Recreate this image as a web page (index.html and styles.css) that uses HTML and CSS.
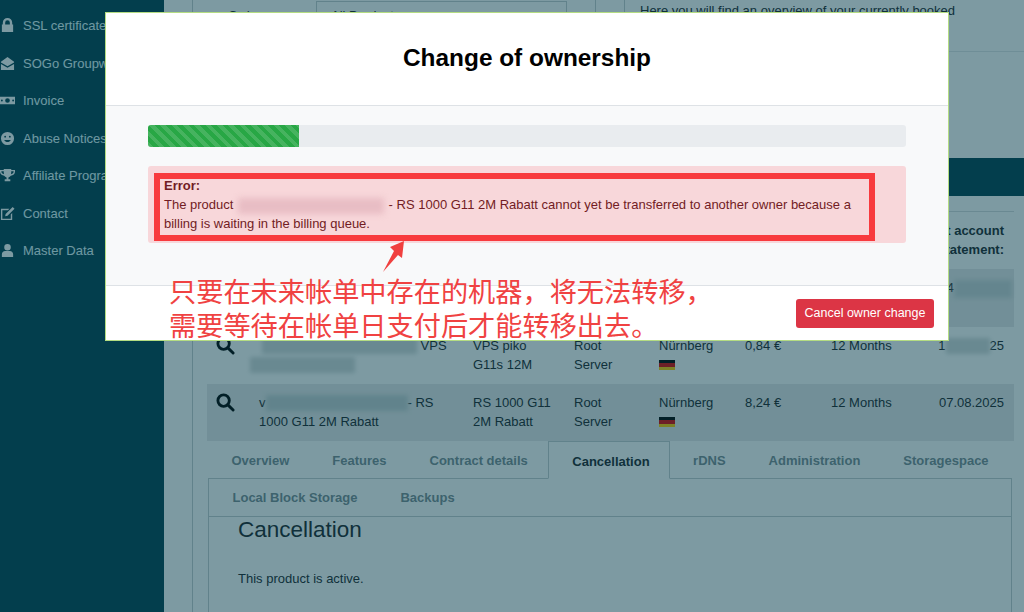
FILE: index.html
```html
<!doctype html>
<html lang="en">
<head>
  <meta charset="UTF-8">
  <meta name="viewport" content="width=device-width, initial-scale=1.0">
  <title>Change of ownership</title>
  <link rel="stylesheet" href="styles.css">
</head>
<body>
  <div class="page">
    <nav class="sidebar">
      <a class="side-item">
        <svg class="side-icon" viewBox="0 0 16 16"><path d="M3 7V5a5 5 0 0 1 10 0v2h1v8H2V7zm2.500 0h5V5a2.500 2.500 0 0 0-5 0z"/></svg>
        SSL certificates
      </a>
      <a class="side-item">
        <svg class="side-icon" viewBox="0 0 16 16"><path d="M8 1l7 5v1L8 11 1 7V6zM1 8.500l7 4 7-4V15H1z"/></svg>
        SOGo Groupware
      </a>
      <a class="side-item">
        <svg class="side-icon" viewBox="0 0 16 16"><path fill-rule="evenodd" d="M0 4h16v8H0zm8 1.500a2.500 2.500 0 1 0 0 5 2.500 2.500 0 0 0 0-5zM2 7a1 1 0 1 0 0 2 1 1 0 0 0 0-2zm12 0a1 1 0 1 0 0 2 1 1 0 0 0 0-2z"/></svg>
        Invoice
      </a>
      <a class="side-item">
        <svg class="side-icon" viewBox="0 0 16 16"><path fill-rule="evenodd" d="M8 1a7 7 0 1 1 0 14A7 7 0 0 1 8 1zM5.500 5a1 1 0 1 0 0 2 1 1 0 0 0 0-2zm5 0a1 1 0 1 0 0 2 1 1 0 0 0 0-2zM4.500 9.500c.8 1.500 2 2.200 3.500 2.200s2.700-.7 3.500-2.200z"/></svg>
        Abuse Notices
      </a>
      <a class="side-item">
        <svg class="side-icon" viewBox="0 0 16 16"><path fill-rule="evenodd" d="M4 1h8v1h4v2c0 2.500-2 4-4.500 4.300A4 4 0 0 1 9 10v2h2v2H5v-2h2v-2a4 4 0 0 1-2.500-1.700C2 8 0 6.500 0 4V2h4zM1.500 3.500V4c0 1.200.9 2.200 2.800 2.700A12 12 0 0 1 4 3.500zm13 0H12a12 12 0 0 1-.3 3.200c1.900-.5 2.800-1.500 2.800-2.700z"/></svg>
        Affiliate Program
      </a>
      <a class="side-item">
        <svg class="side-icon" viewBox="0 0 16 16"><path d="M2 3h8L8.500 4.500H2.500v9h9V9L13 7.500V15H1V3zM13.500 1L15.500 3 8 10.500 5.500 11 6 8.500z"/></svg>
        Contact
      </a>
      <a class="side-item">
        <svg class="side-icon" viewBox="0 0 16 16"><path d="M8 1a3.500 3.500 0 1 1 0 7 3.500 3.500 0 0 1 0-7zM2 15v-3c0-2 1.500-3.500 3.500-3.500h5C12.500 8.500 14 10 14 12v3z"/></svg>
        Master Data
      </a>
    </nav>

    <main class="main">
      <div class="intro">
        <div class="intro-form">
          <span class="intro-label">Order</span>
          <div class="intro-input">All Products</div>
        </div>
        <div class="intro-side"></div>
        <p class="intro-text">Here you will find an overview of your currently booked</p>
      </div>

      <div class="band"></div>

      <section class="products">
        <div class="row row-head">
          <div class="col-date">Next account statement:</div>
        </div>
        <div class="row row-shade">
          <div class="col-date">4<span class="redact redact-date-long"></span></div>
        </div>
        <div class="row">
          <svg class="search-icon" viewBox="0 0 20 20"><circle cx="8" cy="8" r="6"/><path d="M12.500 12.500L18 18"/></svg>
          <div><span class="redact redact-name"></span> VPS<br><span class="redact redact-name-2"></span></div>
          <div>VPS piko<br>G11s 12M</div>
          <div>Root<br>Server</div>
          <div>Nürnberg<span class="flag"></span></div>
          <div>0,84 €</div>
          <div>12 Months</div>
          <div class="col-date">1<span class="redact redact-date"></span>25</div>
        </div>
        <div class="row row-shade">
          <svg class="search-icon" viewBox="0 0 20 20"><circle cx="8" cy="8" r="6"/><path d="M12.500 12.500L18 18"/></svg>
          <div>v<span class="redact redact-name-3"></span>- RS<br>1000 G11 2M Rabatt</div>
          <div>RS 1000 G11<br>2M Rabatt</div>
          <div>Root<br>Server</div>
          <div>Nürnberg<span class="flag"></span></div>
          <div>8,24 €</div>
          <div>12 Months</div>
          <div class="col-date">07.08.2025</div>
        </div>
      </section>

      <div class="tabs">
        <div class="tab-row tab-row-first">
          <a class="tab">Overview</a>
          <a class="tab">Features</a>
          <a class="tab">Contract details</a>
          <a class="tab tab-active">Cancellation</a>
          <a class="tab">rDNS</a>
          <a class="tab">Administration</a>
          <a class="tab">Storagespace</a>
        </div>
        <div class="tab-box">
          <div class="tab-row">
            <a class="tab">Local Block Storage</a>
            <a class="tab">Backups</a>
          </div>
          <div class="tab-content">
            <h2>Cancellation</h2>
            <p>This product is active.</p>
          </div>
        </div>
      </div>
    </main>
  </div>

  <div class="backdrop"></div>

  <div class="modal">
    <header class="modal-head">
      <h1>Change of ownership</h1>
    </header>
    <div class="modal-body">
      <div class="progress"><div class="progress-bar"></div></div>
      <div class="alert">
        <strong>Error:</strong><br>
        The product <span class="redact redact-alert"></span> - RS 1000 G11 2M Rabatt cannot yet be transferred to another owner because a billing is waiting in the billing queue.
      </div>
    </div>
    <footer class="modal-foot">
      <button class="btn-cancel">Cancel owner change</button>
    </footer>
  </div>

  <!-- red markup drawn on top of the screenshot -->
  <div class="note-box"></div>
  <svg class="note-arrow" viewBox="0 0 24 34"><polygon points="22,1 8,7 12,11 1,32 16,15 20,18"/></svg>
  <p class="note-text">只要在未来帐单中存在的机器，将无法转移，<br>需要等待在帐单日支付后才能转移出去。</p>
</body>
</html>
```

FILE: styles.css
```css
html, body {
  margin: 0;
  height: 100%;
  overflow: hidden;
}
body {
  position: relative;
  font-family: "Liberation Sans", Arial, sans-serif;
  font-size: 13px;
  line-height: 19px;
  color: #212529;
  background: #fff;
}
.page {
  display: flex;
  height: 612px;
  overflow: hidden;
}

/* sidebar */
.sidebar {
  flex: 0 0 164px;
  display: flex;
  flex-direction: column;
  padding-top: 7px;
  background: #03404f;
  overflow: hidden;
}
.side-item {
  display: flex;
  align-items: center;
  flex: 0 0 37.5px;
  gap: 8px;
  white-space: nowrap;
  color: #e0fbff;
}
.side-icon {
  flex: 0 0 15px;
  width: 15px;
  height: 15px;
  fill: #fff;
}

/* main column */
.main {
  flex: 1;
  margin-left: 28px;
  border-left: 1px solid #c5cdd0;
  min-width: 0;
}
.intro {
  display: flex;
  height: 51px;
  margin-bottom: 106px;
  border-bottom: 1px solid #e3e6e8;
}
.intro-form {
  display: flex;
  width: 374px;
  padding: 1px 0 0 35px;
  box-sizing: border-box;
}
.intro-label {
  flex: 0 0 88px;
  padding-top: 5px;
}
.intro-input {
  width: 251px;
  height: 30px;
  padding: 4px 0 0 14px;
  box-sizing: border-box;
  border: 1px solid #c5cdd0;
}
.intro-side {
  width: 28px;
  margin-left: 28px;
  border-left: 1px solid #c5cdd0;
  border-right: 1px solid #c5cdd0;
}
.intro-text {
  margin: 0;
  padding: 1px 0 0 15px;
  white-space: nowrap;
}
.band {
  height: 38px;
  background: #03404f;
}

/* product table */
.products {
  margin: 15px 10px 0 14px;
  border-top: 1px solid #d8dcde;
}
.row {
  display: grid;
  grid-template-columns: 52px 214px 101px 85px 86px 86px 100px 1fr;
  height: 57.3px;
  padding: 9px 10px 0 0;
  box-sizing: border-box;
}
.row-head {
  display: flex;
  justify-content: flex-end;
  font-weight: bold;
}
.row-head .col-date {
  width: 92px;
  white-space: normal;
}
.row-shade {
  background: #e8e9ea;
}
.row-shade:nth-child(2) {
  display: flex;
  justify-content: flex-end;
}
.col-date {
  text-align: right;
  white-space: nowrap;
}
.search-icon {
  width: 19px;
  height: 19px;
  margin-left: 9px;
  fill: none;
  stroke: #000;
  stroke-width: 3;
  stroke-linecap: round;
}
.flag {
  display: block;
  width: 16px;
  height: 10px;
  margin-top: 5px;
  background: linear-gradient(#000 33%, #d00 33%, #d00 66%, #fc0 66%);
}
.redact {
  display: inline-block;
  height: 16px;
  vertical-align: middle;
  background: #d6dcdc;
  filter: blur(2px);
}
.redact-date-long {
  width: 58px;
  height: 18px;
  margin-right: -8px;
  background: #ccd4d6;
}
.redact-date {
  width: 44px;
}
.redact-name {
  width: 155px;
  margin-left: 3px;
}
.redact-name-2 {
  width: 105px;
  margin-left: -9px;
}
.redact-name-3 {
  width: 142px;
  background: #c6d0d2;
}

/* tabs */
.tabs {
  margin: 0 12px 0 15px;
}
.tab-row {
  display: flex;
  height: 38px;
  padding-left: 2px;
  box-sizing: border-box;
  border-bottom: 1px solid #c5cdd0;
}
.tab {
  display: flex;
  align-items: center;
  padding: 0 21.5px;
  font-weight: bold;
  color: #7a8c92;
  white-space: nowrap;
}
.tab-row-first .tab {
  padding-top: 2px;
}
.tab-active {
  height: 38px;
  margin: 0 2px 0 -1px;
  padding: 2px 19px 0 23px;
  box-sizing: border-box;
  border: 1px solid #c5cdd0;
  border-bottom: 1px solid #fff;
  color: #212529;
}
.tab-box {
  height: 133px;
  border: 1px solid #c5cdd0;
  border-width: 0 1px;
}
.tab-content {
  padding: 0 29px;
}
.tab-content h2 {
  margin: 0;
  font-size: 22.5px;
  font-weight: normal;
  line-height: 26px;
}
.tab-content p {
  margin: 26px 0 0;
}

/* modal */
.backdrop {
  position: absolute;
  inset: 0;
  background: rgba(3, 59, 75, 0.516);
}
.modal {
  position: absolute;
  left: 105px;
  top: 12px;
  display: flex;
  flex-direction: column;
  width: 844px;
  height: 329px;
  box-sizing: border-box;
  border: 1px solid #b4dc82;
  background: #fff;
}
.modal-head {
  flex: 0 0 93px;
  box-sizing: border-box;
  padding-top: 30px;
  border-bottom: 1px solid #dee2e6;
  text-align: center;
}
.modal-head h1 {
  margin: 0;
  font-size: 24.4px;
  line-height: 30px;
  color: #000;
}
.modal-body {
  flex: 1;
  padding: 19px 42px 0;
  background: #f8f9fa;
}
.progress {
  height: 22px;
  border-radius: 3px;
  background: #e9ecef;
  overflow: hidden;
}
.progress-bar {
  width: 19.9%;
  height: 100%;
  background-color: #28a745;
  background-image: repeating-linear-gradient(45deg, rgba(255, 255, 255, 0.14) 0 4px, transparent 4px 8px);
}
.alert {
  margin-top: 19px;
  padding: 10px 30px 10px 16px;
  border-radius: 3px;
  background: #f8d7da;
  color: #721c24;
}
.redact-alert {
  width: 146px;
  margin: 0 1px;
  background: #e8bdc4;
  filter: blur(3px);
}
.modal-foot {
  flex: 0 0 55px;
  display: flex;
  justify-content: flex-end;
  align-items: center;
  box-sizing: border-box;
  padding-right: 14px;
  border-top: 1px solid #dee2e6;
}
.btn-cancel {
  width: 138px;
  height: 29px;
  padding: 0;
  border: 0;
  border-radius: 3px;
  background: #dc3545;
  color: #fff;
  font: 12.5px "Liberation Sans", Arial, sans-serif;
}

/* red annotation */
.note-box {
  position: absolute;
  left: 154px;
  top: 173px;
  width: 721px;
  height: 68px;
  box-sizing: border-box;
  border: 6.5px solid #f83a3d;
}
.note-arrow {
  position: absolute;
  left: 382px;
  top: 240px;
  width: 24px;
  height: 34px;
  fill: #f0403f;
}
.note-text {
  position: absolute;
  left: 169px;
  top: 273px;
  margin: 0;
  font-family: "Noto Sans CJK SC", sans-serif;
  font-size: 27.2px;
  line-height: 34px;
  color: #f04242;
  white-space: nowrap;
}
```
